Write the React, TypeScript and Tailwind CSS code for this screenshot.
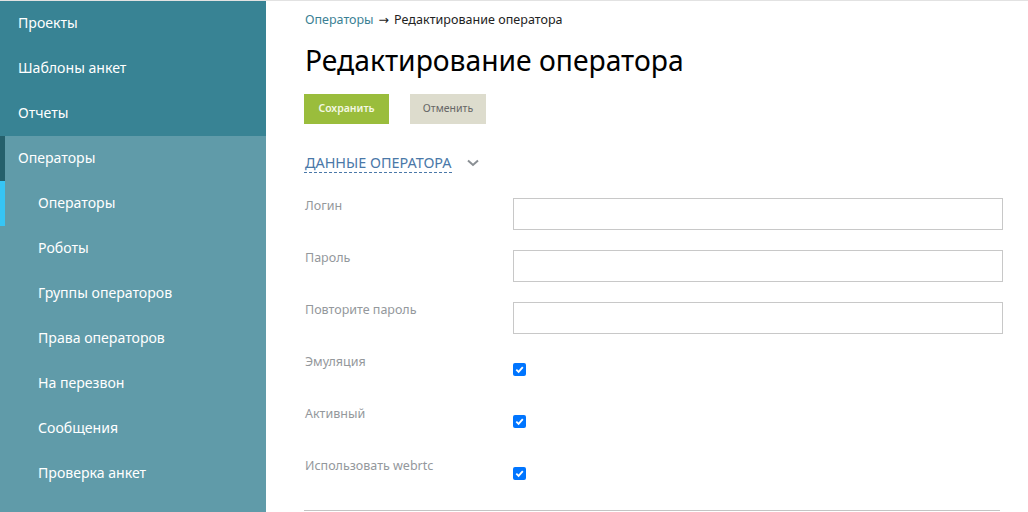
import React from 'react'

const topItems = ['Проекты', 'Шаблоны анкет', 'Отчеты']
const subItems = ['Операторы', 'Роботы', 'Группы операторов', 'Права операторов', 'На перезвон', 'Сообщения', 'Проверка анкет']
const textFields = ['Логин', 'Пароль', 'Повторите пароль']
const checkFields = ['Эмуляция', 'Активный', 'Использовать webrtc']

function Checkbox() {
  return (
    <span className="flex h-[13px] w-[13px] items-center justify-center rounded-[2px] bg-[#0075ff]">
      <svg viewBox="0 0 12 12" className="h-[11px] w-[11px]" fill="none" stroke="white" strokeWidth="2">
        <path d="M2.5 6.2 L5 8.6 L9.6 3.4" />
      </svg>
    </span>
  )
}

export default function App() {
  return (
    <div className="flex h-[512px] w-[1028px] overflow-hidden border-t border-[#e2e2e2] bg-white font-['Noto_Sans',sans-serif]">
      {/* Sidebar */}
      <aside className="w-[266px] shrink-0 bg-[#609ba9] text-[14.1px] text-white">
        <div className="bg-[#388394]">
          {topItems.map((item) => (
            <div key={item} className="flex h-[45px] items-center pb-[2px] pl-[18px]">{item}</div>
          ))}
        </div>
        <div className="flex h-[45px] items-center border-l-[5px] border-[#25606c] pb-[2px] pl-[13px]">Операторы</div>
        {subItems.map((item, i) => (
          <div
            key={item}
            className={`flex h-[45px] items-center border-l-[5px] pb-[2px] pl-[33px] ${i === 0 ? 'border-[#36c5f5]' : 'border-transparent'}`}
          >
            {item}
          </div>
        ))}
      </aside>

      {/* Content */}
      <main className="flex-1 pl-[38px] pr-[25px]">
        <div className="pl-[1px] pt-[10px] text-[12.5px] leading-[17px] text-[#222]">
          <span className="text-[#3b7f94]">Операторы</span>
          <span className="mx-[5px] font-['DejaVu_Sans',sans-serif]">→</span>
          <span className="tracking-[0.04px]">Редактирование оператора</span>
        </div>
        <h1 className="mt-[12px] pl-[1px] text-[28.25px] leading-[40px] text-black">Редактирование оператора</h1>
        <div className="mt-[14px] flex gap-[21px]">
          <button className="h-[30px] w-[85px] bg-[#9abd3c] text-[10.5px] font-semibold text-[#f4f8e4]">Сохранить</button>
          <button className="h-[30px] w-[76px] bg-[#dddccd] pb-[1px] text-[10.5px] text-[#666]">Отменить</button>
        </div>
        <div className="mt-[28px] flex items-center">
          <span className="border-b border-dashed border-[#4a78a8] pl-[1px] pt-[1px] text-[14.4px] leading-[19px] text-[#4a78a8]">ДАННЫЕ ОПЕРАТОРА</span>
          <svg viewBox="0 0 12 8" className="ml-[15px] h-[8px] w-[12px]" fill="none" stroke="#8a8f94" strokeWidth="2">
            <path d="M1 1.5 L6 6 L11 1.5" />
          </svg>
        </div>
        <div className="mt-[25px] flex flex-col">
          {textFields.map((label) => (
            <div key={label} className="flex h-[52px]">
              <label className="-mt-[1px] w-[209px] pl-[1px] text-[12.5px] leading-[17px] text-[#94989c]">{label}</label>
              <div className="h-[32px] w-[490px] border border-[#c8c8c8] bg-white" />
            </div>
          ))}
          {checkFields.map((label) => (
            <div key={label} className="flex h-[52px]">
              <label className="-mt-[1px] w-[209px] pl-[1px] text-[12.5px] leading-[17px] text-[#94989c]">{label}</label>
              <div className="pt-[9px]"><Checkbox /></div>
            </div>
          ))}
        </div>
        <div className="h-px w-[696px] bg-[#c4c4c4]" />
      </main>
    </div>
  )
}
